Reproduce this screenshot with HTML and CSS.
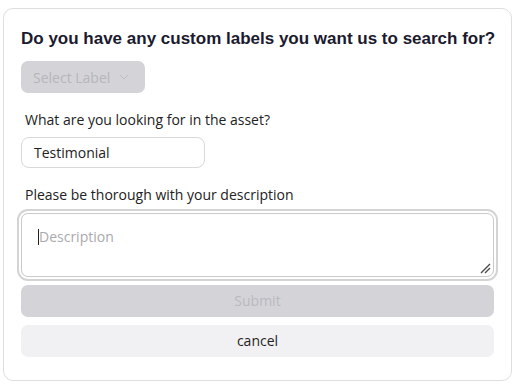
FILE: index.html
```html
<!DOCTYPE html>
<html>
  <head>
    <meta charset='UTF-8'>
    <title>Custom labels</title>
    <link rel="stylesheet" href="styles.css">
  </head>
  <body>
    <div class='card'>
      <h2 class='card__title'>Do you have any custom labels you want us to search for?</h2>
      <div class='select'>
        <span>Select Label</span>
        <svg class='select__chev' width='10' height='6' viewBox='0 0 10 6'><path d='M1 1l4 4 4-4' fill='none' stroke='#bdbdc2' stroke-width='1'/></svg>
      </div>
      <label class='field__label'>What are you looking for in the asset?</label>
      <div class='input'>Testimonial</div>
      <label class='field__label'>Please be thorough with your description</label>
      <div class='textarea'>
        <span class='textarea__caret'></span><span class='textarea__ph'>Description</span>
        <svg class='textarea__grip' width='11' height='11' viewBox='0 0 11 11'><path d='M10 1L1 10M10 5L5 10' stroke='#4a4a4a' stroke-width='1.4'/></svg>
      </div>
      <div class='btn btn--submit'>Submit</div>
      <div class='btn btn--cancel'>cancel</div>
    </div>
  </body>
</html>
```

FILE: styles.css
```css
html,
body {
	margin: 0;
	background: #fff;
}

body {
	padding: 8px 6px 8px 3px;
	font-family: 'Open Sans', 'Noto Sans', sans-serif;
	color: #222;
}

.card {
	border: 1px solid #dedede;
	border-radius: 10px;
	padding: 18px 17px 23px 17px;
	display: flex;
	flex-direction: column;
	align-items: flex-start;
}

  .card__title {
  	margin: 0 0 10px 0;
  	font-family: 'Liberation Sans', Arial, sans-serif;
  	font-size: 17px;
  	font-weight: bold;
  	color: #1b1a2e;
  	line-height: 24px;
  	white-space: nowrap;
  }

  .select {
  	display: flex;
  	align-items: center;
  	gap: 9px;
  	height: 32px;
  	padding: 0 16px 0 12px;
  	background: #d4d4d8;
  	border-radius: 7px;
  	font-size: 14px;
  	color: #b6b6bb;
  }

  .field__label {
  	margin: 17px 0 8px 4px;
  	font-size: 14px;
  	line-height: 19px;
  }

  .input {
  	box-sizing: border-box;
  	width: 184px;
  	height: 31px;
  	padding: 0 12px;
  	border: 1px solid #d9d9d9;
  	border-radius: 8px;
  	font-size: 14px;
  	line-height: 29px;
  }

  .textarea {
  	position: relative;
  	box-sizing: border-box;
  	width: 100%;
  	height: 64px;
  	margin: 1px 0 8px 0;
  	padding: 13px 16px;
  	border: 1px solid #cacaca;
  	border-radius: 7px;
  	box-shadow: 0 0 0 2px #fff, 0 0 0 4px #d4d4d4;
  	font-size: 14px;
  	line-height: 19px;
  	color: #a9a9ae;
  }

    .textarea__caret {
    	display: inline-block;
    	width: 1px;
    	height: 16px;
    	background: #222;
    	vertical-align: -3px;
    }

    .textarea__grip {
    	position: absolute;
    	right: 2px;
    	bottom: 2px;
    }

  .btn {
  	box-sizing: border-box;
  	width: 100%;
  	height: 32px;
  	line-height: 32px;
  	text-align: center;
  	border-radius: 7px;
  	font-size: 14px;
  }

  .btn--submit {
  	background: #d4d4d8;
  	color: #b9b9be;
  	margin-bottom: 8px;
  }

  .btn--cancel {
  	background: #f1f1f3;
  	color: #1f1f24;
  	font-weight: 500;
  }
```
